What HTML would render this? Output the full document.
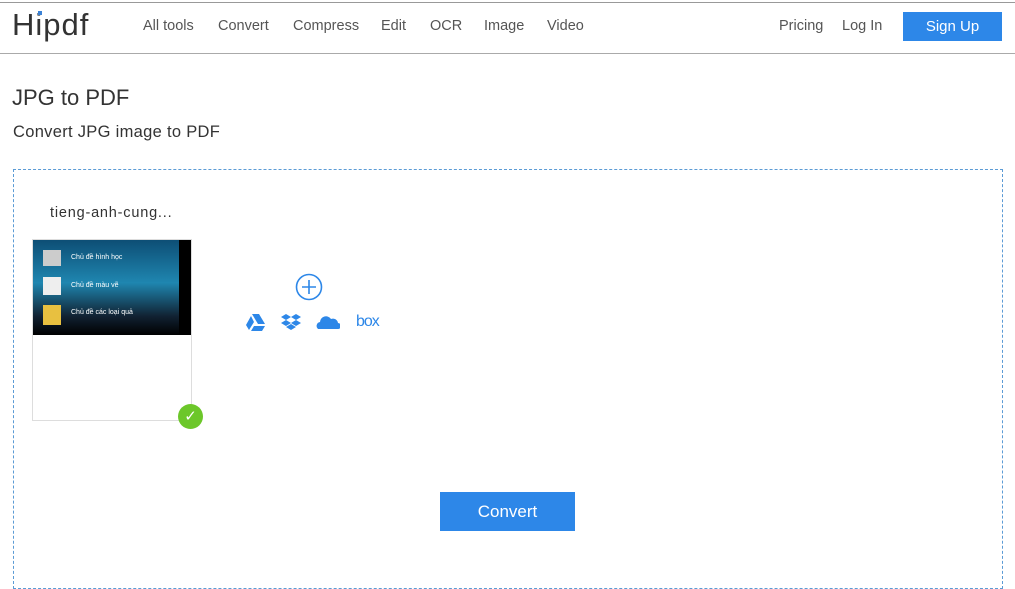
<!DOCTYPE html>
<html><head><meta charset="utf-8"><style>
*{margin:0;padding:0;box-sizing:border-box}
body{width:1015px;height:575px;overflow:hidden;background:#fff;font-family:"Liberation Sans",sans-serif;color:#333;position:relative}
.t{position:absolute;white-space:nowrap}
.hdr{position:absolute;left:0;top:2px;width:1015px;height:52px;border-top:1px solid #999;border-bottom:1px solid #aaa}
.nav{font-size:14.5px;color:#555;top:18px}
.drop{position:absolute;left:13px;top:169px;width:990px;height:420px;border:1px dashed #5b9bd5}
</style></head><body>
<div class="hdr"></div>
<div class="t" style="left:12px;top:7px;font-size:31px;color:#333;letter-spacing:1px">Hipdf</div>
<div style="position:absolute;left:38px;top:11px;width:4px;height:4px;background:#3b82d6"></div>
<div class="t nav" style="left:143px">All tools</div>
<div class="t nav" style="left:218px">Convert</div>
<div class="t nav" style="left:293px">Compress</div>
<div class="t nav" style="left:381px">Edit</div>
<div class="t nav" style="left:430px">OCR</div>
<div class="t nav" style="left:484px">Image</div>
<div class="t nav" style="left:547px">Video</div>
<div class="t nav" style="left:779px">Pricing</div>
<div class="t nav" style="left:842px">Log In</div>
<div style="position:absolute;left:903px;top:12px;width:99px;height:29px;background:#2d87e8;color:#fff;font-size:15px;text-align:center;line-height:29px">Sign Up</div>
<div class="t" style="left:12px;top:85px;font-size:22px;color:#333">JPG to PDF</div>
<div class="t" style="left:13px;top:123px;font-size:16.5px;color:#333;letter-spacing:0.3px">Convert JPG image to PDF</div>
<div class="drop"></div>
<div class="t" style="left:50px;top:205px;font-size:14.5px;color:#333;letter-spacing:0.8px">tieng-anh-cung...</div>
<div style="position:absolute;left:32px;top:239px;width:160px;height:182px;border:1px solid #ddd;background:#fff"></div>
<div style="position:absolute;left:33px;top:240px;width:158px;height:95px;background:linear-gradient(180deg,#0d4e75 0%,#1f86b0 45%,#123 80%,#000 100%)">
<div style="position:absolute;left:10px;top:10px;width:18px;height:16px;background:#ccc"></div>
<div style="position:absolute;left:10px;top:37px;width:18px;height:18px;background:#eee"></div>
<div style="position:absolute;left:10px;top:65px;width:18px;height:20px;background:#e8c040"></div>
<div class="t" style="left:38px;top:14px;font-size:7px;color:#fff">Chủ đề hình học</div>
<div class="t" style="left:38px;top:42px;font-size:7px;color:#fff">Chủ đề màu vẽ</div>
<div class="t" style="left:38px;top:69px;font-size:7px;color:#fff">Chủ đề các loại quả</div>
<div style="position:absolute;right:0;top:0;width:12px;height:95px;background:#000"></div>
</div>
<div style="position:absolute;left:178px;top:404px;width:25px;height:25px;border-radius:50%;background:#6cc72a;color:#fff;font-size:15px;text-align:center;line-height:25px">✓</div>
<svg style="position:absolute;left:295px;top:273px" width="28" height="28"><circle cx="14" cy="14" r="12.5" fill="none" stroke="#2d87e8" stroke-width="1.6"/><path d="M14 7v14M7 14h14" stroke="#2d87e8" stroke-width="1.6"/></svg>
<svg style="position:absolute;left:246px;top:313px" width="20" height="18"><path d="M6 1h7l6 10h-7zM5 3l3 6-5 8-3-5zM8 13h11l-3 5H5z" fill="#2d87e8"/></svg>
<svg style="position:absolute;left:281px;top:313px" width="20" height="18"><path d="M5 1l5 3-5 3-5-3zM15 1l5 3-5 3-5-3zM5 7l5 3-5 3-5-3zM15 7l5 3-5 3-5-3zM5 14l5-3 5 3-5 3z" fill="#2d87e8"/></svg>
<svg style="position:absolute;left:316px;top:313px" width="24" height="18"><path d="M2 16a4 4 0 0 1 2-7 6 6 0 0 1 11-3 5 5 0 0 1 7 4 3 3 0 0 1 0 6z" fill="#2d87e8"/></svg>
<div class="t" style="left:356px;top:313px;font-size:16px;color:#2d87e8;letter-spacing:-1px">box</div>
<div style="position:absolute;left:440px;top:492px;width:135px;height:39px;background:#2d87e8;color:#fff;font-size:17px;text-align:center;line-height:39px">Convert</div>
</body></html>
